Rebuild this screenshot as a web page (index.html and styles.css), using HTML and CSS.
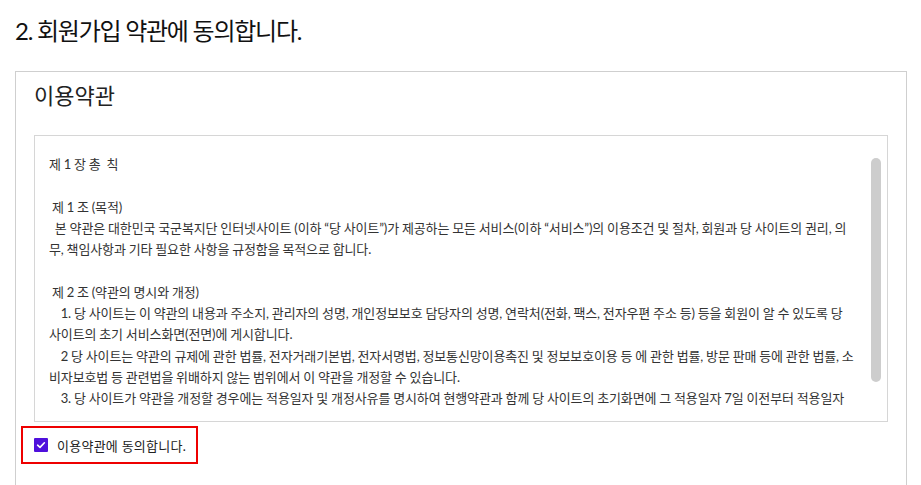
FILE: index.html
```html
<!DOCTYPE html>
<html lang="ko">
<head>
<meta charset="utf-8">
<title>회원가입 약관 동의</title>
<link rel="stylesheet" href="styles.css">
</head>
<body>
<main class="page">
  <h2 class="step-title">2. 회원가입 약관에 동의합니다.</h2>
  <section class="terms-card">
    <h3 class="terms-heading">이용약관</h3>
    <div class="terms-box">
      <div class="terms-text">
        <div class="terms-view">
          <p class="line">제 1 장 총  칙</p>
          <p class="line blank"></p>
          <p class="line"> 제 1 조 (목적)</p>
          <p class="line">  본 약관은 대한민국 국군복지단 인터넷사이트 (이하 “당 사이트”)가 제공하는 모든 서비스(이하 “서비스”)의 이용조건 및 절차, 회원과 당 사이트의 권리, 의<br>무, 책임사항과 기타 필요한 사항을 규정함을 목적으로 합니다.</p>
          <p class="line blank"></p>
          <p class="line"> 제 2 조 (약관의 명시와 개정)</p>
          <p class="line">    1. 당 사이트는 이 약관의 내용과 주소지, 관리자의 성명, 개인정보보호 담당자의 성명, 연락처(전화, 팩스, 전자우편 주소 등) 등을 회원이 알 수 있도록 당<br>사이트의 초기 서비스화면(전면)에 게시합니다.</p>
          <p class="line">    2 당 사이트는 약관의 규제에 관한 법률, 전자거래기본법, 전자서명법, 정보통신망이용촉진 및 정보보호이용 등 에 관한 법률, 방문 판매 등에 관한 법률, 소<br>비자보호법 등 관련법을 위배하지 않는 범위에서 이 약관을 개정할 수 있습니다.</p>
          <p class="line">    3. 당 사이트가 약관을 개정할 경우에는 적용일자 및 개정사유를 명시하여 현행약관과 함께 당 사이트의 초기화면에 그 적용일자 7일 이전부터 적용일자</p>
        </div>
      </div>
      <div class="scroll-track"><div class="scroll-thumb"></div></div>
    </div>
    <label class="agree">
      <span class="check-box">
        <svg viewBox="0 0 14 14" width="14" height="14"><path d="M3.6 7.2 L6 9.4 L10.4 4.8" fill="none" stroke="#fff" stroke-width="1.6" stroke-linecap="round" stroke-linejoin="round"/></svg>
      </span>
      <span class="agree-text">이용약관에 동의합니다.</span>
    </label>
  </section>
</main>
</body>
</html>
```

FILE: styles.css
```css
html, body {
  margin: 0;
  padding: 0;
  background: #fff;
}

body {
  font-family: Lato, "Noto Sans CJK KR", sans-serif;
  color: #333;
}

.page {
  padding: 14px 14px 0 15px;
}

.step-title {
  margin: 0 0 23px 0;
  font-size: 24px;
  line-height: 34px;
  font-weight: 400;
  letter-spacing: -1.25px;
  color: #111;
}

.terms-card {
  border: 1px solid #cfcfcf;
  padding: 6px 18px 40px 18px;
}

.terms-heading {
  margin: 0 0 21px 0;
  font-size: 22px;
  line-height: 36px;
  font-weight: 400;
  color: #222;
}

.terms-box {
  display: flex;
  height: 285px;
  border: 1px solid #d6d6d6;
  overflow: hidden;
}

.terms-text {
  flex: 1;
  min-width: 0;
  padding: 18px 0 0 14px;
}

.terms-view {
  height: 256px;
  overflow: hidden;
}

.line {
  margin: 0;
  font-size: 13px;
  line-height: 21.3px;
  letter-spacing: -0.12px;
  word-spacing: -0.3px;
  white-space: pre;
  min-height: 21.3px;
  color: #333;
}

.scroll-track {
  width: 30px;
  flex: none;
  display: flex;
  justify-content: flex-end;
  padding-right: 6px;
  box-sizing: border-box;
}

.scroll-thumb {
  width: 10px;
  height: 224px;
  margin-top: 22px;
  border-radius: 5px;
  background: #cdcdcd;
}

.agree {
  display: inline-flex;
  align-items: center;
  gap: 9px;
  margin: 4px 0 0 -13px;
  padding: 8px 9px 8px 11px;
  border: 2px solid #ee0000;
  width: 153px;
  height: 18px;
  white-space: nowrap;
}

.check-box {
  flex: none;
  width: 14px;
  height: 14px;
  background: #4f10dc;
  border-radius: 1px;
  display: flex;
}

.agree-text {
  font-size: 13px;
  color: #222;
  letter-spacing: 0.25px;
}
```
